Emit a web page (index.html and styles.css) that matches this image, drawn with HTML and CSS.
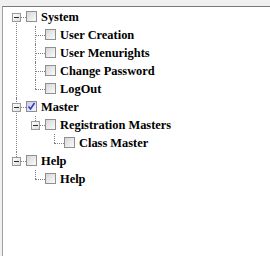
FILE: index.html
```html
<!DOCTYPE html>
<html lang="en">
<head>
    <meta charset="UTF-8">
    <title>Menu Rights</title>
    <link rel="stylesheet" href="styles.css">
</head>
<body>

    <div class="panel">
        <ul class="tree">
            <li>
                <div class="row"><span class="slot"><span class="toggle"></span></span><span class="check"></span><span class="label">System</span></div>
                <ul>
                    <li><div class="row"><span class="slot"></span><span class="check"></span><span class="label">User Creation</span></div></li>
                    <li><div class="row"><span class="slot"></span><span class="check"></span><span class="label">User Menurights</span></div></li>
                    <li><div class="row"><span class="slot"></span><span class="check"></span><span class="label">Change Password</span></div></li>
                    <li><div class="row"><span class="slot"></span><span class="check"></span><span class="label">LogOut</span></div></li>
                </ul>
            </li>
            <li>
                <div class="row"><span class="slot"><span class="toggle"></span></span><span class="check checked"><svg width="9" height="9" viewBox="0 0 9 9"><path d="M1.5 4.5 L3.5 7 L7.5 1" fill="none" stroke="#2f3fb5" stroke-width="1.6"/></svg></span><span class="label">Master</span></div>
                <ul>
                    <li>
                        <div class="row"><span class="slot"><span class="toggle"></span></span><span class="check"></span><span class="label">Registration Masters</span></div>
                        <ul>
                            <li><div class="row"><span class="slot"></span><span class="check"></span><span class="label">Class Master</span></div></li>
                        </ul>
                    </li>
                </ul>
            </li>
            <li>
                <div class="row"><span class="slot"><span class="toggle"></span></span><span class="check"></span><span class="label">Help</span></div>
                <ul>
                    <li><div class="row"><span class="slot"></span><span class="check"></span><span class="label">Help</span></div></li>
                </ul>
            </li>
        </ul>
    </div>

</body>
</html>
```

FILE: styles.css
```css
body {
    margin: 0;
    padding: 0;
    background-color: #f0f0f0;
    font-family: "Liberation Serif", "Times New Roman", serif;
    color: #000;
}

.panel {
    margin: 6px 0 0 2px;
    height: 249px;
    background-color: #fff;
    border-top: 1px solid #7a7a7a;
    border-left: 1px solid #a0a0a0;
}

.tree,
.tree ul {
    list-style: none;
    margin: 0;
    padding: 0;
}

.tree {
    padding: 1px 0 0 9px;
}

.tree ul {
    padding-left: 19px;
}

.tree li {
    position: relative;
}

/* tree connector lines */
.tree li::before {
    content: "";
    position: absolute;
    left: 4px;
    top: 0;
    height: 100%;
    border-left: 1px dotted #808080;
}

.tree li:last-child::before {
    height: 9px;
}

.tree > li:first-child::before {
    top: 9px;
    height: calc(100% - 9px);
}

.tree li::after {
    content: "";
    position: absolute;
    left: 4px;
    top: 9px;
    width: 10px;
    border-top: 1px dotted #808080;
}

.row {
    display: flex;
    height: 18px;
    position: relative;
    z-index: 1;
}

.slot {
    width: 14px;
    flex: none;
}

.toggle {
    display: block;
    position: relative;
    width: 7px;
    height: 7px;
    margin-top: 5px;
    border: 1px solid #9a9a9a;
    background: linear-gradient(135deg, #ffffff, #dcdcdc);
}

.toggle::after {
    content: "";
    position: absolute;
    left: 1px;
    top: 3px;
    width: 5px;
    height: 1px;
    background-color: #2a2a2a;
}

.check {
    flex: none;
    width: 9px;
    height: 9px;
    margin-top: 3px;
    border: 1px solid #8e8f8f;
    background: linear-gradient(135deg, #d6d6d6, #fbfbfb);
}

.check.checked {
    background: linear-gradient(135deg, #c8c8ee, #f6f6ff);
}

.check svg {
    display: block;
}

.label {
    margin-left: 4px;
    font-size: 12.4px;
    font-weight: bold;
    line-height: 18px;
    white-space: nowrap;
}
```
